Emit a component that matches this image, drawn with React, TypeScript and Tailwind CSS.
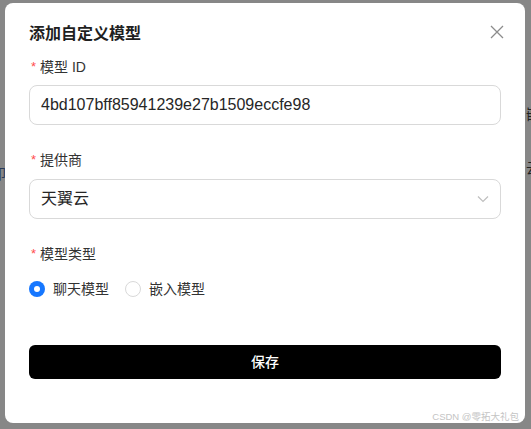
import React, { FC, useState } from 'react';

const font = { fontFamily: '"Liberation Sans", "Noto Sans CJK SC", sans-serif' };

const Label: FC<{ text: string }> = ({ text }) => (
  <div className="flex items-center h-[22px] text-[14px] text-[#333]">
    <span className="text-[#ff4d4f] mr-[4px] ml-[2px] text-[13px]">*</span>
    {text}
  </div>
);

const Radio: FC<{ checked: boolean; label: string; onClick: () => void }> = ({ checked, label, onClick }) => (
  <label className="flex items-center mr-[16px] cursor-pointer" onClick={onClick}>
    {checked ? (
      <span className="w-[16px] h-[16px] rounded-full bg-[#1677ff] flex items-center justify-center">
        <span className="w-[6px] h-[6px] rounded-full bg-white" />
      </span>
    ) : (
      <span className="w-[16px] h-[16px] rounded-full border border-[#d9d9d9] bg-white" />
    )}
    <span className="ml-[8px] text-[14px] text-[#333]">{label}</span>
  </label>
);

const App: FC = () => {
  const [modelType, setModelType] = useState('chat');

  return (
    <div className="relative w-[531px] h-[429px] overflow-hidden bg-[#878787] pt-[3px] pl-[5px]" style={font}>
      {/* page behind the backdrop, only slivers show */}
      <span className="absolute left-[526px] top-[104px] text-[14px] text-[#222]">嵌</span>
      <span className="absolute left-[526px] top-[158px] text-[14px] text-[#222]">云</span>
      <span className="absolute left-[-8px] top-[164px] text-[14px] text-[#2a3a5a]">印</span>

      <div className="relative w-[520px] h-[420px] bg-white rounded-[8px] px-[24px] pt-[19px]">
        <div className="h-[24px] flex items-center text-[16px] font-bold text-[#1f1f1f]">添加自定义模型</div>
        <button className="absolute right-[20px] top-[21px] w-[16px] h-[16px] flex items-center justify-center">
          <svg width="14" height="14" viewBox="0 0 14 14" fill="none" stroke="#8c8c8c" strokeWidth="1.3">
            <path d="M1 1L13 13M13 1L1 13" />
          </svg>
        </button>

        <div className="mt-[10px]">
          <Label text="模型 ID" />
        </div>
        <div className="mt-[7px] h-[40px] rounded-[8px] border border-[#d9d9d9] flex items-center px-[11px] text-[16px] text-[#262626]">
          4bd107bff85941239e27b1509eccfe98
        </div>

        <div className="mt-[24px]">
          <Label text="提供商" />
        </div>
        <div className="mt-[8px] h-[40px] rounded-[8px] border border-[#d9d9d9] flex items-center justify-between px-[11px] text-[16px] text-[#262626]">
          <span>天翼云</span>
          <svg width="12" height="8" viewBox="0 0 12 8" fill="none" stroke="#bfbfbf" strokeWidth="1.2">
            <path d="M1 1.5L6 6.5L11 1.5" />
          </svg>
        </div>

        <div className="mt-[24px]">
          <Label text="模型类型" />
        </div>
        <div className="mt-[13px] h-[22px] flex items-center">
          <Radio checked={modelType === 'chat'} label="聊天模型" onClick={() => setModelType('chat')} />
          <Radio checked={modelType === 'embed'} label="嵌入模型" onClick={() => setModelType('embed')} />
        </div>

        <button className="mt-[45px] w-full h-[34px] rounded-[6px] bg-black text-white text-[14px] font-medium flex items-center justify-center">
          保存
        </button>
      </div>

      <span className="absolute right-[12px] bottom-[5px] text-[9.5px] text-[#c4c4c4]">CSDN @零拓大礼包</span>
    </div>
  );
};

export default App;
